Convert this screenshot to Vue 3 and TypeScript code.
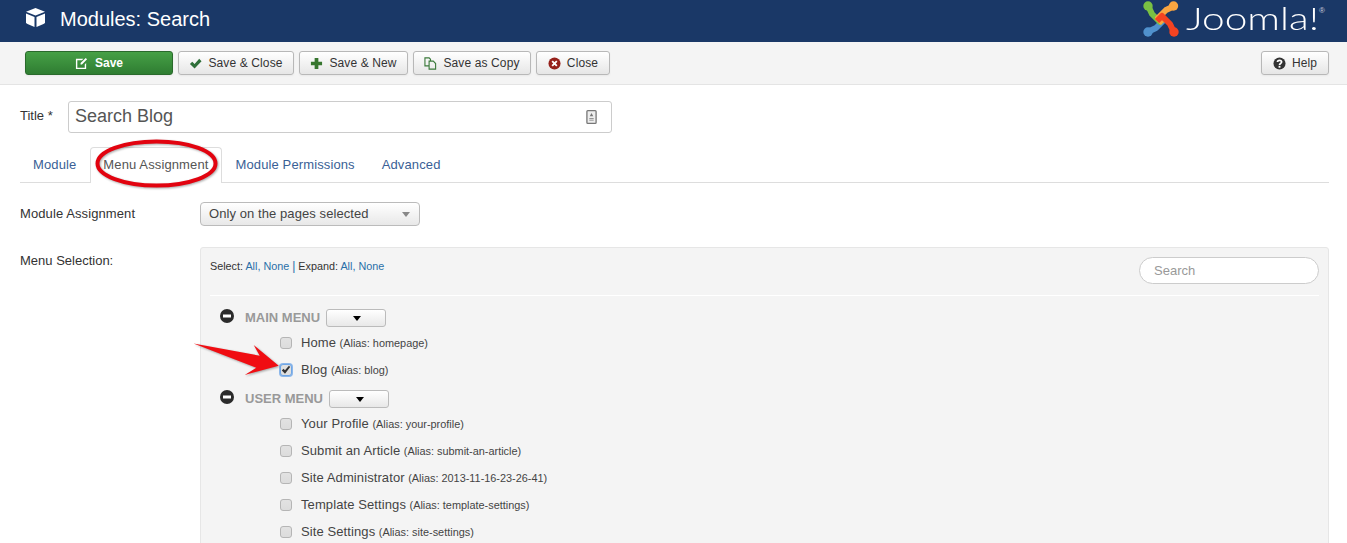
<script setup lang="ts">
interface Item { label: string; alias: string; checked?: boolean }
interface Menu { title: string; items: Item[]; mod: string }
const menus: Menu[] = [
  { title: 'MAIN MENU', mod: 'main', items: [
    { label: 'Home', alias: 'homepage' },
    { label: 'Blog', alias: 'blog', checked: true },
  ] },
  { title: 'USER MENU', mod: 'user', items: [
    { label: 'Your Profile', alias: 'your-profile' },
    { label: 'Submit an Article', alias: 'submit-an-article' },
    { label: 'Site Administrator', alias: '2013-11-16-23-26-41' },
    { label: 'Template Settings', alias: 'template-settings' },
    { label: 'Site Settings', alias: 'site-settings' },
  ] },
]
const tabs = ['Module', 'Menu Assignment', 'Module Permissions', 'Advanced']
</script>

<template>
  <div class="page">
    <header class="head">
      <svg class="cube" viewBox="0 0 19 19" width="19" height="19">
        <path fill="#fff" d="M9.500 0 19 3.800 9.500 7.500 0 3.800zM0 5.500l8.500 3.500V19L1.500 16 0 15zM19 5.500V15l-1.500 1L10.500 19V9z"/>
      </svg>
      <h1 class="h-title">Modules: Search</h1>
      <div class="logo">
        <svg viewBox="0 0 36 36" width="36" height="36">
          <g fill="none" stroke-width="6" stroke-linejoin="round">
            <path stroke="#5091cd" d="M5.500 30.500 13 27 21 19 16 14"/>
            <path stroke="#7ac143" d="M5.500 5.500 9 13 17 21 22 16"/>
            <path stroke="#f9a541" d="M30.500 5.500 23 9 15 17 20 22"/>
            <path stroke="#f44321" d="M30.500 30.500 27 23 19 15 14 20"/>
          </g>
          <circle cx="5" cy="5" r="4.700" fill="#7ac143"/>
          <circle cx="30.500" cy="5" r="4.700" fill="#f9a541"/>
          <circle cx="31" cy="31" r="4.700" fill="#f44321"/>
          <circle cx="5" cy="31" r="4.700" fill="#5091cd"/>
        </svg>
        <span class="logo-text"><span class="logo-inner">Joomla!</span></span><span class="reg">®</span>
      </div>
    </header>

    <div class="toolbar">
      <button class="btn save">
        <svg viewBox="0 0 14 14" width="13" height="13"><path fill="#fff" d="M1 2h8L7.500 3.500H2.500v8h8V8L12 6.500V13H1zM6 6.500 11.500 1 13 2.500 7.500 8H6z"/></svg>
        Save
      </button>
      <button class="btn w-sc">
        <svg viewBox="0 0 14 14" width="13" height="13"><path fill="#2f6f3a" d="M1 7.500 3.500 5l2.500 2.500L11 2l2.500 2.500L6 12.500z"/></svg>
        Save &amp; Close
      </button>
      <button class="btn w-sn">
        <svg viewBox="0 0 14 14" width="13" height="13"><path fill="#37762f" d="M5 1h4v4h4v4H9v4H5V9H1V5h4z"/></svg>
        Save &amp; New
      </button>
      <button class="btn w-cp">
        <svg viewBox="0 0 14 14" width="13" height="13"><path fill="none" stroke="#3b7a3b" stroke-width="1.200" d="M5 9.500H1V1h4.500L7 2.500V4.500M5.500 4.500H10l2.500 2.500v6H5.500z"/></svg>
        Save as Copy
      </button>
      <button class="btn w-cl">
        <svg viewBox="0 0 14 14" width="13" height="13"><circle cx="7" cy="7" r="6.500" fill="#96211b"/><path stroke="#fff" stroke-width="2" d="M4.500 4.500l5 5M9.500 4.500l-5 5"/></svg>
        Close
      </button>
      <button class="btn help">
        <svg viewBox="0 0 14 14" width="13" height="13"><circle cx="7" cy="7" r="6.500" fill="#333"/><path fill="none" stroke="#fff" stroke-width="1.800" d="M4.800 5.500C4.800 3 9.300 3 9.300 5.500 9.300 7 7 7 7 8.500"/><rect x="6" y="9.500" width="2" height="2" fill="#fff"/></svg>
        Help
      </button>
    </div>

    <main class="content">
      <div class="title-row">
        <label class="t-label">Title *</label>
        <div class="t-input">
          <span class="t-val">Search Blog</span>
          <svg viewBox="0 0 12 16" width="11" height="14"><rect x=".75" y=".75" width="10.500" height="14.500" rx="1" fill="#eee" stroke="#777" stroke-width="1.500"/><path fill="#777" d="M6 3.500 8 7H4zM3.500 9h5v1h-5zM3.500 11h5v1h-5z"/></svg>
        </div>
      </div>

      <nav class="tabs">
        <a v-for="t in tabs" :key="t" class="tab" :class="{ active: t === 'Menu Assignment' }">{{ t }}</a>
      </nav>

      <div class="field assign">
        <div class="f-label">Module Assignment</div>
        <div class="select">Only on the pages selected<i class="caret grey"></i></div>
      </div>

      <div class="field selection">
        <div class="f-label sel-label">Menu Selection:</div>
        <section class="panel">
          <div class="p-top">
            <div class="links">Select: <a>All,</a> <a>None</a> <span class="bar">|</span> Expand: <a>All,</a> <a>None</a></div>
            <div class="search">Search</div>
          </div>
          <div v-for="m in menus" :key="m.title" class="menu" :class="m.mod">
            <div class="m-head">
              <svg viewBox="0 0 14 14" width="14" height="14" class="minus"><circle cx="7" cy="7" r="7" fill="#2b2b2b"/><rect x="3" y="5.500" width="8" height="3" fill="#fff"/></svg>
              <span class="m-title">{{ m.title }}</span>
              <span class="m-btn"><i class="caret"></i></span>
            </div>
            <div v-for="it in m.items" :key="it.label" class="row">
              <span class="cb" :class="{ on: it.checked }">
                <svg v-if="it.checked" viewBox="0 0 12 12" width="10" height="10"><path fill="#333" d="M1 6.500 3 4.500l1.800 1.800L9.500 1 11 2.500 4.800 10.500z"/></svg>
              </span>
              <span class="r-label">{{ it.label }}</span>
              <span class="alias">(Alias: {{ it.alias }})</span>
            </div>
          </div>
        </section>
      </div>
    </main>

    <svg class="marks" width="1347" height="543" viewBox="0 0 1347 543">
      <ellipse cx="156.500" cy="163.500" rx="59" ry="22" fill="none" stroke="#e2030f" stroke-width="4"/>
      <path fill="#f00d12" d="M193.500 343.500 259.700 355.700 253.700 345 278.700 365.700 244.700 375 256.300 367.700z"/>
    </svg>
  </div>
</template>

<style>
html, body { margin: 0; background: #fff; overflow: hidden; }
</style>

<style scoped>
.page { position: relative; width: 1347px; height: 543px; overflow: hidden; font-family: "Liberation Sans", Arial, sans-serif; font-size: 13px; color: #333; background: #fff; }
.head { height: 42px; background: #1a3867; display: flex; align-items: flex-start; padding-left: 26px; box-sizing: border-box; }
.cube { margin: 8px 15px 0 0; flex: none; }
.h-title { margin: 0; color: #fff; font-size: 20px; font-weight: 400; line-height: 38px; }
.logo { margin-left: auto; margin-right: 22px; display: flex; align-items: flex-start; color: #fff; height: 42px; }
.logo svg { margin-right: 7px; margin-top: 1px; flex: none; }
.logo-text { display: block; width: 131px; height: 37px; }
.logo-inner { display: inline-block; font-family: Lato, sans-serif; font-weight: 300; font-size: 31px; line-height: 37px; transform: scaleX(1.310); transform-origin: left center; white-space: nowrap; }
.reg { font-size: 8px; margin: 7px 0 0 2px; line-height: 1; color: #ccd; }

.toolbar { height: 43px; box-sizing: border-box; background: #f4f4f4; border-bottom: 1px solid #e4e4e4; padding: 9px 18px 0 25px; display: flex; gap: 5px; align-items: flex-start; }
.btn { height: 24px; box-sizing: border-box; padding: 0; margin: 0; display: flex; align-items: center; justify-content: center; gap: 6px; font-family: inherit; font-size: 12px; letter-spacing: .12px; color: #333; border: 1px solid #b8b8b8; border-radius: 3px; background: linear-gradient(#fff, #e6e6e6); box-shadow: 0 1px 2px rgba(0,0,0,.05); }
.save { width: 148px; color: #fff; font-weight: 700; letter-spacing: 0; gap: 7px; background: linear-gradient(#46a046, #2f7d32); border-color: #2a6a2c; }
.w-sc { width: 116px; } .w-sn { width: 109px; } .w-cp { width: 118px; } .w-cl { width: 74px; }
.help { width: 68px; margin-left: auto; }

.content { padding: 16px 18px 0 20px; }
.title-row { display: flex; align-items: flex-start; gap: 14px; }
.t-label { font-size: 13px; line-height: 20px; margin-top: 5px; width: 34px; }
.t-input { width: 544px; height: 32px; box-sizing: border-box; border: 1px solid #ccc; border-radius: 3px; display: flex; align-items: center; justify-content: space-between; padding: 0 14px 0 6px; font-size: 18px; color: #555; }
.t-val { margin-top: -2px; }

.tabs { display: flex; margin-top: 14px; height: 36px; box-sizing: border-box; border-bottom: 1px solid #ddd; }
.tab { height: 36px; box-sizing: border-box; padding: 0 12px; margin-right: 1px; line-height: 34px; letter-spacing: .12px; color: #3a5f96; border: 1px solid transparent; border-bottom: 0; }
.tab.active { color: #555; background: #fff; border-color: #ddd; border-radius: 4px 4px 0 0; }

.field { display: flex; }
.assign { margin-top: 19px; }
.f-label { width: 180px; line-height: 24px; flex: none; letter-spacing: .1px; }
.select { width: 220px; height: 24px; box-sizing: border-box; border: 1px solid #bbb; border-radius: 4px; background: linear-gradient(#fff, #e8e8e8); padding-left: 8px; line-height: 21px; letter-spacing: .08px; color: #444; position: relative; }
.caret { position: absolute; width: 0; height: 0; border: 4px solid transparent; border-top: 5px solid #000; border-bottom: 0; }
.caret.grey { border-top-color: #888; right: 9px; top: 9px; }

.selection { margin-top: 21px; }
.sel-label { margin-top: 2px; letter-spacing: 0; }
.panel { width: 1129px; height: 400px; box-sizing: border-box; background: #f4f4f4; border: 1px solid #e6e6e6; border-radius: 3px; padding: 9px 9px 0 9px; }
.p-top { display: flex; justify-content: space-between; align-items: flex-start; height: 38px; border-bottom: 1px solid #fff; }
.links { font-size: 10.800px; line-height: 19px; color: #333; }
.links a { color: #2a6fa8; }
.bar { color: #2a6fa8; font-size: 12px; }
.search { width: 180px; height: 27px; box-sizing: border-box; background: #fff; border: 1px solid #ccc; border-radius: 14px; padding-left: 14px; line-height: 25px; font-size: 13px; color: #999; }
.menu { padding-left: 10px; }
.main { padding-top: 13px; }
.user { padding-top: 7px; }
.m-head { height: 18px; display: flex; align-items: center; position: relative; }
.minus { margin-right: 11px; margin-top: -5px; }
.m-title { font-weight: 700; font-size: 13px; color: #999; margin-top: -2px; }
.m-btn { position: relative; margin-left: 6px; width: 60px; height: 18px; box-sizing: border-box; border: 1px solid #bbb; border-radius: 3px; background: linear-gradient(#fff, #e8e8e8); }
.m-btn .caret { left: 26px; top: 6px; }
.row { height: 27px; display: flex; align-items: center; padding-left: 60px; }
.row:nth-of-type(2) { margin-top: 2px; }
.cb { width: 12px; height: 12px; box-sizing: border-box; flex: none; border: 1px solid #b5b5b5; border-radius: 3px; background: linear-gradient(#e2e2e2, #dcdcdc); margin-right: 9px; display: flex; align-items: center; justify-content: center; }
.cb.on { border-color: #6fa6e6; box-shadow: 0 0 0 1px #8cb7ea; background: #e0e0e0; }
.r-label { font-size: 13px; color: #444; margin-right: 3.500px; letter-spacing: .1px; }
.alias { font-size: 10.900px; color: #444; }
.marks { position: absolute; left: 0; top: 0; pointer-events: none; filter: drop-shadow(1px 1px 1px rgba(0,0,0,.35)); }
</style>
